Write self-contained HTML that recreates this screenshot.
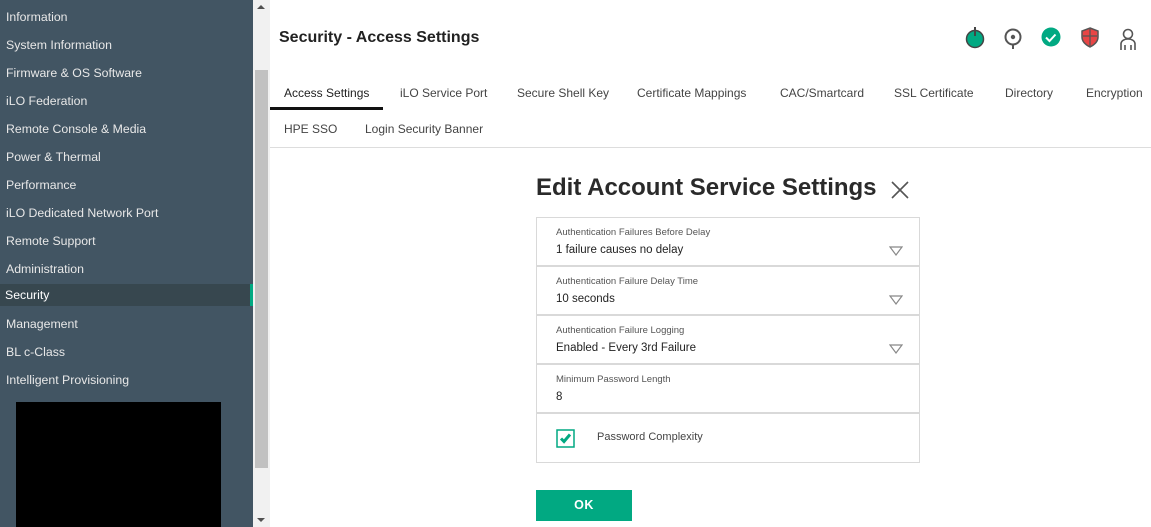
<!DOCTYPE html>
<html><head><meta charset="utf-8"><style>
*{margin:0;padding:0;box-sizing:border-box}
body{width:1151px;height:527px;overflow:hidden;background:#fff;font-family:"Liberation Sans",sans-serif;position:relative}
#side{position:absolute;left:0;top:0;width:253px;height:527px;background:#425563}
#side div{position:absolute;left:0;width:253px;height:22px;line-height:22px;padding-left:6px;color:#e8e8e8;font-size:12.3px}
#side .act{background:#37474f;color:#fff;border-right:3px solid #01a982}
#blk{position:absolute;left:16px;top:402px;width:205px;height:125px;background:#000}
#sb{position:absolute;left:253px;top:0;width:17px;height:527px;background:#f1f1f1}
#thumb{position:absolute;left:2px;top:70px;width:13px;height:398px;background:#c1c1c1}
.ar{position:absolute;left:4px;width:0;height:0;border-left:4px solid transparent;border-right:4px solid transparent}
h1{position:absolute;left:279px;top:29px;font-size:16px;font-weight:bold;color:#222}
.tab{position:absolute;font-size:12px;color:#444;white-space:nowrap}
#ul{position:absolute;left:270px;top:107px;width:113px;height:3px;background:#111}
#hr{position:absolute;left:270px;top:147px;width:881px;height:1px;background:#ddd}
h2{position:absolute;left:536px;top:174px;font-size:24px;font-weight:bold;color:#2a2a2a}
#box{position:absolute;left:536px;top:217px;width:384px;height:246px;border:1px solid #d9d9d9}
.row{position:absolute;left:0;width:382px;border-bottom:2px solid #d9d9d9}
.lab{position:absolute;left:19px;font-size:9.5px;color:#555}
.val{position:absolute;left:19px;font-size:11.5px;color:#222}
.tri{position:absolute;left:352px;}
#ok{position:absolute;left:536px;top:490px;width:96px;height:31px;background:#01a982;color:#fff;font-weight:bold;font-size:12.5px;text-align:center;line-height:31px;letter-spacing:.5px}
</style></head><body>
<div id="side">
<div style="top:6px">Information</div>
<div style="top:34px">System Information</div>
<div style="top:62px">Firmware &amp; OS Software</div>
<div style="top:90px">iLO Federation</div>
<div style="top:118px">Remote Console &amp; Media</div>
<div style="top:146px">Power &amp; Thermal</div>
<div style="top:174px">Performance</div>
<div style="top:202px">iLO Dedicated Network Port</div>
<div style="top:230px">Remote Support</div>
<div style="top:258px">Administration</div>
<div class="act" style="top:284px;padding-left:5px">Security</div>
<div style="top:313px">Management</div>
<div style="top:341px">BL c-Class</div>
<div style="top:369px">Intelligent Provisioning</div>
<span id="blk"></span>
</div>
<div id="sb"><div class="ar" style="top:5px;border-bottom:4px solid #505050"></div><div id="thumb"></div><div class="ar" style="top:518px;border-top:4px solid #505050"></div></div>

<h1>Security - Access Settings</h1>
<svg style="position:absolute;left:960px;top:24px" width="190" height="28" viewBox="0 0 190 28">
 <circle cx="15" cy="15" r="8.5" fill="#01a982" stroke="#444" stroke-width="1.5"/><line x1="15" y1="3" x2="15" y2="12" stroke="#444" stroke-width="2"/>
 <circle cx="53" cy="13" r="7.5" fill="none" stroke="#555" stroke-width="2"/><circle cx="53" cy="13" r="2.2" fill="#555"/><line x1="53" y1="20" x2="53" y2="25" stroke="#555" stroke-width="2"/>
 <circle cx="91" cy="13" r="9.5" fill="#01a982"/><path d="M86 13.5l3.5 3.5 6-6.5" fill="none" stroke="#fff" stroke-width="2"/>
 <path d="M130 4l8 3v6c0 5-4 8-8 10-4-2-8-5-8-10V7z" fill="#e84545" stroke="#555" stroke-width="1.5"/><path d="M130 5v17M123 12h14" stroke="#555" stroke-width="1.3"/>
 <circle cx="168" cy="10" r="4.5" fill="none" stroke="#555" stroke-width="1.6"/><path d="M161 26v-6c0-3 3-5 7-5s7 2 7 5v6M165 21v5M171 21v5" fill="none" stroke="#555" stroke-width="1.6"/>
</svg>

<span class="tab" style="left:284px;top:86px;color:#222">Access Settings</span>
<span class="tab" style="left:400px;top:86px">iLO Service Port</span>
<span class="tab" style="left:517px;top:86px">Secure Shell Key</span>
<span class="tab" style="left:637px;top:86px">Certificate Mappings</span>
<span class="tab" style="left:780px;top:86px">CAC/Smartcard</span>
<span class="tab" style="left:894px;top:86px">SSL Certificate</span>
<span class="tab" style="left:1005px;top:86px">Directory</span>
<span class="tab" style="left:1086px;top:86px">Encryption</span>
<span class="tab" style="left:284px;top:122px">HPE SSO</span>
<span class="tab" style="left:365px;top:122px">Login Security Banner</span>
<div id="ul"></div><div id="hr"></div>

<h2>Edit Account Service Settings</h2>
<svg style="position:absolute;left:891px;top:181px" width="18" height="18"><path d="M1 1L17 17M17 1L1 17" stroke="#555" stroke-width="1.6"/></svg>

<div id="box">
 <div class="row" style="top:0;height:49px"><span class="lab" style="top:9px">Authentication Failures Before Delay</span><span class="val" style="top:26px">1 failure causes no delay</span><svg class="tri" style="top:28px" width="14" height="10"><path d="M1 1h12L7 9z" fill="none" stroke="#888" stroke-width="1.2"/></svg></div>
 <div class="row" style="top:49px;height:49px"><span class="lab" style="top:9px">Authentication Failure Delay Time</span><span class="val" style="top:26px">10 seconds</span><svg class="tri" style="top:28px" width="14" height="10"><path d="M1 1h12L7 9z" fill="none" stroke="#888" stroke-width="1.2"/></svg></div>
 <div class="row" style="top:98px;height:49px"><span class="lab" style="top:9px">Authentication Failure Logging</span><span class="val" style="top:26px">Enabled - Every 3rd Failure</span><svg class="tri" style="top:28px" width="14" height="10"><path d="M1 1h12L7 9z" fill="none" stroke="#888" stroke-width="1.2"/></svg></div>
 <div class="row" style="top:147px;height:49px"><span class="lab" style="top:9px">Minimum Password Length</span><span class="val" style="top:26px">8</span></div>
 <svg style="position:absolute;left:19px;top:211px" width="20" height="20"><rect x="1" y="1" width="17" height="17" fill="#fff" stroke="#01a982" stroke-width="1.5"/><path d="M5 9.5l3 3 6-7" fill="none" stroke="#01a982" stroke-width="3"/></svg>
 <span style="position:absolute;left:60px;top:213px;font-size:11px;color:#444">Password Complexity</span>
</div>
<div id="ok">OK</div>
</body></html>
